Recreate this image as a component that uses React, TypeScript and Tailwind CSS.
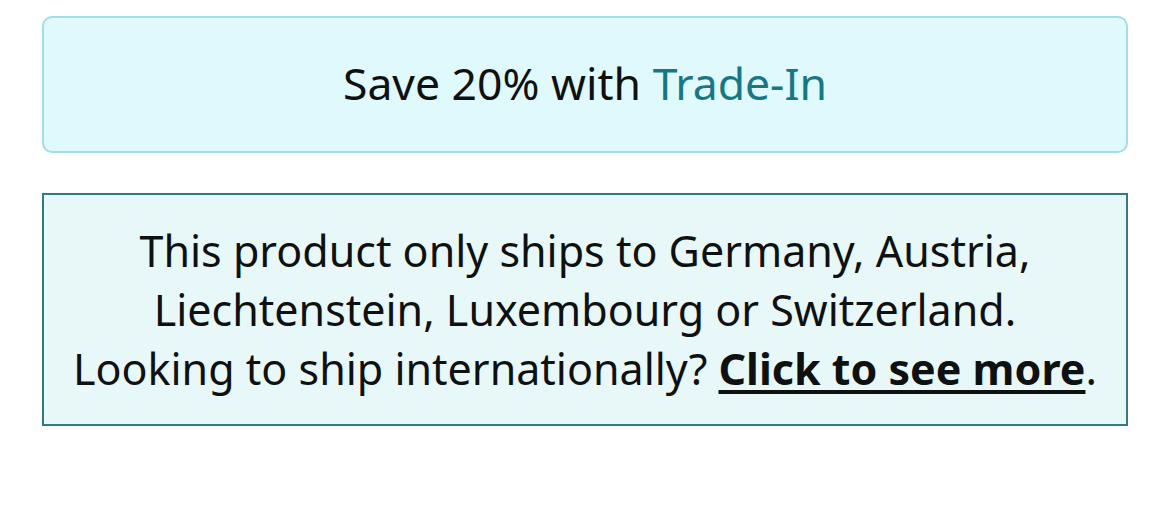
export default function App() {
  return (
    <div className="min-h-screen bg-white px-[42px] pt-[16px] font-['Noto_Sans',sans-serif] text-[#0f1111]">
      <div className="w-[1086px]">
        <div className="flex h-[137px] items-center justify-center rounded-[10px] border-2 border-[#a3dde6] bg-[#dff9fd] pb-[2px] text-[44.5px]">
          <span>
            Save 20% with <a className="text-[#167884]">Trade-In</a>
          </span>
        </div>
        <div className="mt-[40px] flex h-[233px] items-center justify-center border-2 border-[#2f7b86] bg-[#e8f8f9] text-center text-[43px] leading-[59px]">
          <p>
            This product only ships to Germany, Austria,
            <br />
            Liechtenstein, Luxembourg or Switzerland.
            <br />
            Looking to ship internationally? <a className="font-bold underline underline-offset-[5px]">Click to see more</a>.
          </p>
        </div>
      </div>
    </div>
  );
}
